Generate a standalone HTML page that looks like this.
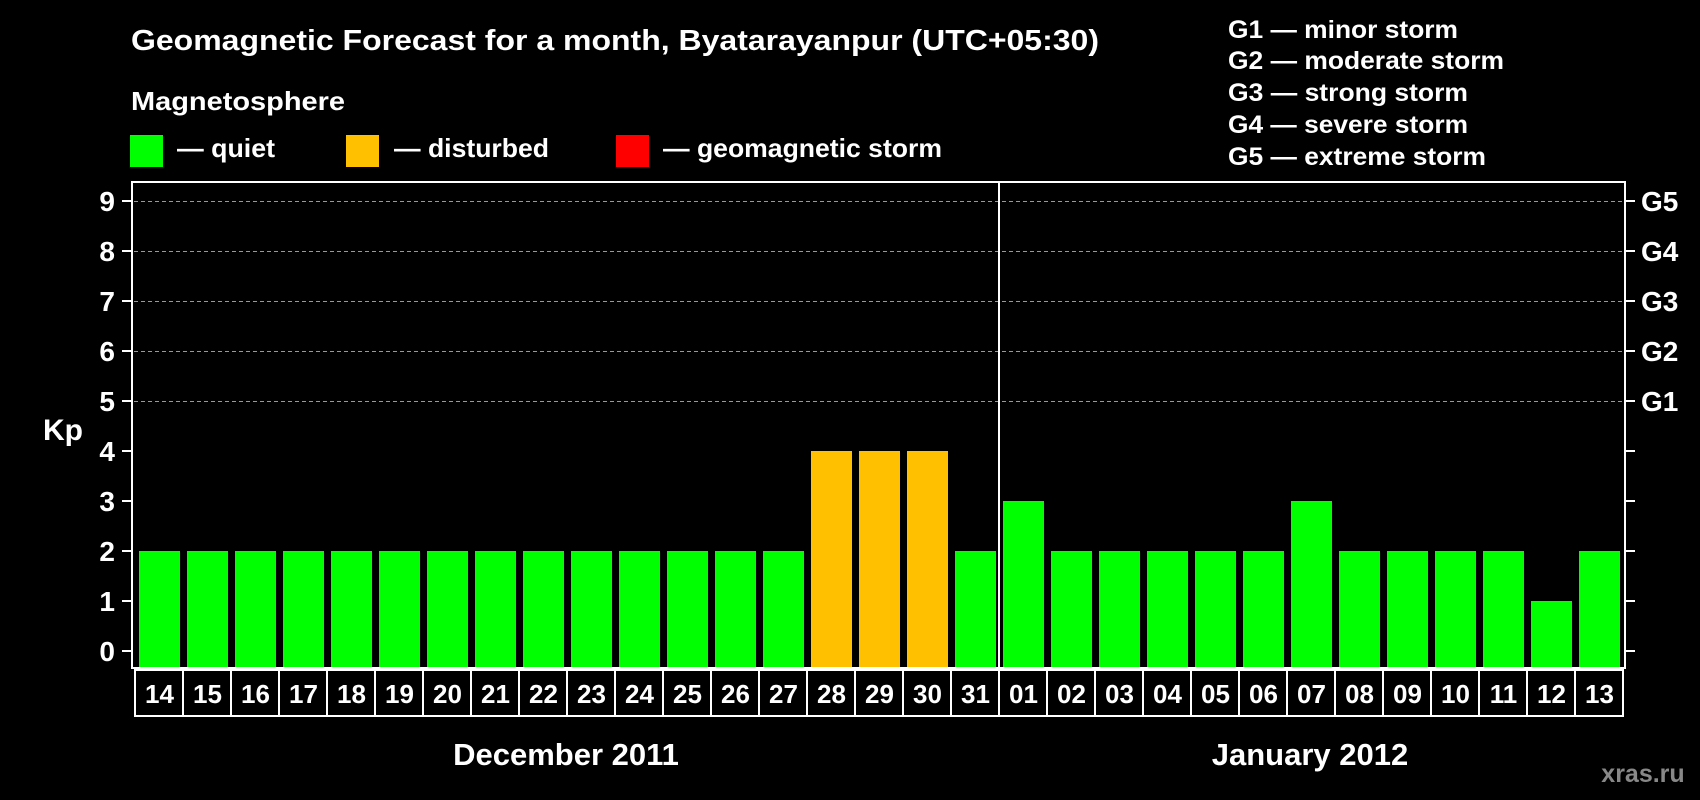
<!DOCTYPE html>
<html><head><meta charset="utf-8"><style>
html,body{margin:0;padding:0;background:#000;width:1700px;height:800px;overflow:hidden}
svg{display:block}
text{font-family:"Liberation Sans",Arial,sans-serif;font-weight:bold;fill:#fff}
</style></head><body>
<svg width="1700" height="800" viewBox="0 0 1700 800" xmlns="http://www.w3.org/2000/svg">
<rect width="1700" height="800" fill="#000"/>
<text x="131" y="50" font-size="29" textLength="968" lengthAdjust="spacingAndGlyphs">Geomagnetic Forecast for a month, Byatarayanpur (UTC+05:30)</text>
<text x="131" y="110" font-size="26" textLength="214" lengthAdjust="spacingAndGlyphs">Magnetosphere</text>
<rect x="130" y="135" width="33" height="32" fill="#00ff00"/>
<rect x="346" y="135" width="33" height="32" fill="#ffc000"/>
<rect x="616" y="135" width="33" height="32" fill="#ff0000"/>
<text x="177" y="157" font-size="26" textLength="98" lengthAdjust="spacingAndGlyphs">— quiet</text>
<text x="394" y="157" font-size="26" textLength="155" lengthAdjust="spacingAndGlyphs">— disturbed</text>
<text x="663" y="157" font-size="26" textLength="279" lengthAdjust="spacingAndGlyphs">— geomagnetic storm</text>
<g font-size="25">
<text x="1228" y="38" textLength="230" lengthAdjust="spacingAndGlyphs">G1 — minor storm</text>
<text x="1228" y="69" textLength="276" lengthAdjust="spacingAndGlyphs">G2 — moderate storm</text>
<text x="1228" y="101" textLength="240" lengthAdjust="spacingAndGlyphs">G3 — strong storm</text>
<text x="1228" y="133" textLength="240" lengthAdjust="spacingAndGlyphs">G4 — severe storm</text>
<text x="1228" y="165" textLength="258" lengthAdjust="spacingAndGlyphs">G5 — extreme storm</text>
</g>
<g stroke="#999" stroke-width="1" stroke-dasharray="4,3">
<line x1="134" x2="1624" y1="201.5" y2="201.5"/>
<line x1="134" x2="1624" y1="251.5" y2="251.5"/>
<line x1="134" x2="1624" y1="301.5" y2="301.5"/>
<line x1="134" x2="1624" y1="351.5" y2="351.5"/>
<line x1="134" x2="1624" y1="401.5" y2="401.5"/>
</g>
<g id="bars"></g>
<line x1="999" x2="999" y1="182" y2="668" stroke="#fff" stroke-width="2"/>
<rect x="132" y="182" width="1493" height="486" fill="none" stroke="#fff" stroke-width="2"/>
<g stroke="#fff" stroke-width="2" id="ticks"></g>
<g font-size="28" text-anchor="end" id="ylab"></g>
<g font-size="28" id="glab">
<text x="1641" y="211">G5</text>
<text x="1641" y="261">G4</text>
<text x="1641" y="311">G3</text>
<text x="1641" y="361">G2</text>
<text x="1641" y="411">G1</text>
</g>
<text x="43" y="440" font-size="30">Kp</text>
<g id="dates"></g>
<text x="566" y="765" font-size="31" text-anchor="middle">December 2011</text>
<text x="1310" y="765" font-size="31" text-anchor="middle">January 2012</text>
<text x="1643" y="782" font-size="25" text-anchor="middle" style="fill:#888">xras.ru</text>
</svg>
<script>
var ns="http://www.w3.org/2000/svg";
function el(t,a,p,txt){var e=document.createElementNS(ns,t);for(var k in a)e.setAttribute(k,a[k]);if(txt)e.textContent=txt;document.getElementById(p).appendChild(e);}
var vals=[2,2,2,2,2,2,2,2,2,2,2,2,2,2,4,4,4,2,3,2,2,2,2,2,3,2,2,2,2,1,2];
var days=["14","15","16","17","18","19","20","21","22","23","24","25","26","27","28","29","30","31","01","02","03","04","05","06","07","08","09","10","11","12","13"];
for(var i=0;i<31;i++){
 var x=139+i*48,v=vals[i],c=v>=4?"#ffc000":"#00ff00";
 el("rect",{x:x,y:651-v*50,width:41,height:v*50+17,fill:c},"bars");
 el("rect",{x:x-4,y:670,width:48,height:46,fill:"none",stroke:"#fff","stroke-width":2},"dates");
 el("text",{x:x+20.5,y:703,"font-size":26,"text-anchor":"middle"},"dates",days[i]);
}
for(var k=0;k<=9;k++){
 var y=651-k*50;
 el("line",{x1:122,x2:132,y1:y,y2:y},"ticks");
 el("line",{x1:1625,x2:1635,y1:y,y2:y},"ticks");
 el("text",{x:115,y:y+10},"ylab",""+k);
}
</script>
</body></html>
